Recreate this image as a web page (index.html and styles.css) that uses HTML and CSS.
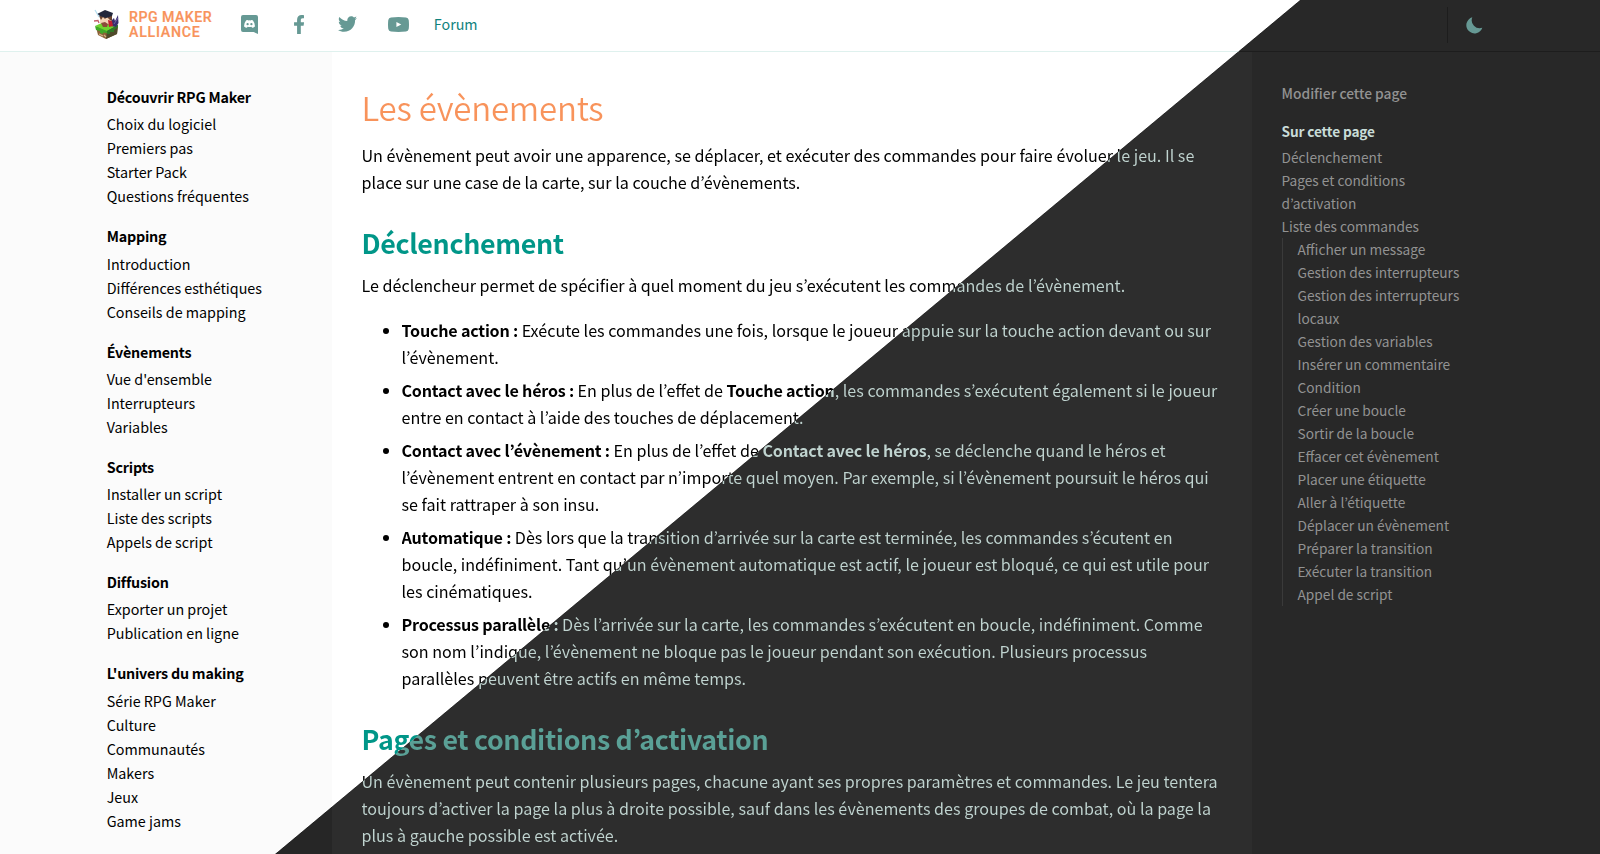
FILE: index.html
```html
<!DOCTYPE html>
<html lang="fr">
<head>
<meta charset="utf-8">
<title>Les évènements</title>
<link rel="stylesheet" href="styles.css">
</head>
<body>
<header class="topbar">
  <a class="brand">
    <svg class="brand-mark" viewBox="0 0 26 31" width="26" height="31">
      <path d="M2 18 L13 13 L24 17 L23 25 L12 30 L4 26 Z" fill="#8a6238"/>
      <path d="M1 17 L12 12 L24 16 L13 23 Z" fill="#6fd42f"/>
      <path d="M13 22 L24 16 L23 25 L12 30 Z" fill="#4f4a2a"/>
      <path d="M1 17 L13 22 V24 L9 23.500 V25 L6 24 V22 L2 21 Z" fill="#3fa928"/>
      <path d="M13 22 L24 16 V18 L20 21 V23 L16 23 V25 L13 25 Z" fill="#2f7a26"/>
      <path d="M5 25 L9 27 M10 26 L12 28" stroke="#d3b184" stroke-width="1.200"/>
      <path d="M18 11 L20 9 L21 12 L24 6 L24.500 14 L22 18 L17 17 Z" fill="#3a2f6e"/>
      <path d="M20 15 L24 9" stroke="#7d6bb8" stroke-width=".8"/>
      <path d="M6 7 H17 V14 L12 16 L6 14 Z" fill="#f3d3b6"/>
      <path d="M14 11 L18 12 L19 17 L15 18 Z" fill="#c2202f"/>
      <path d="M7 14 L11 13 L14 15 L13 18 L9 18 Z" fill="#8c4a3a"/>
      <path d="M5 7 L7 11 L9 8 L11 10 L13 8 L16 11 L18 12 V6 Z" fill="#6a4430"/>
      <path d="M3 5 L11 1 L19 4 L18 7 L12 9 L6 7 Z" fill="#20263a"/>
      <path d="M1 1 L5 8" stroke="#b4def0" stroke-width="1.200"/>
      <path d="M0 12 L4 11.500 L5 14" stroke="#c4606a" stroke-width="1.300" fill="none"/>
    </svg>
    <span class="brand-name"><span class="brand-line">RPG MAKER</span><span class="brand-line brand-line-b">ALLIANCE</span></span>
  </a>
  <nav class="social">
    <svg class="ico ico-discord" viewBox="0 0 17 19" width="17" height="19"><path fill-rule="evenodd" d="M2 0H15Q17 0 17 2V19L12.600 17H2Q0 17 0 15V2Q0 0 2 0ZM5.200 5.300Q2.900 8.300 3.100 11.500Q4.400 12.700 5.900 12.700L6.600 11.700Q8.500 12.200 10.400 11.700L11.100 12.700Q12.600 12.700 13.900 11.500Q14.100 8.300 11.800 5.300Q10.800 4.900 10 4.900L9.700 5.400Q8.500 5.200 7.300 5.400L7 4.900Q6.200 4.900 5.200 5.300Z"/><circle cx="6.600" cy="9.200" r="1.150"/><circle cx="10.400" cy="9.200" r="1.150"/></svg>
    <svg class="ico ico-facebook" viewBox="22.900 0 274.200 512" width="10.300" height="19"><path d="M279.140 288l14.220-92.660h-88.910v-60.130c0-25.350 12.420-50.060 52.240-50.060h40.420V6.260S260.430 0 225.360 0c-73.220 0-121.080 44.380-121.080 124.720v70.620H22.890V288h81.390v224h100.170V288z"/></svg>
    <svg class="ico ico-twitter" viewBox="0 48 512 416" width="19" height="16"><path d="M459.370 151.716c.325 4.548.325 9.097.325 13.645 0 138.720-105.583 298.558-298.558 298.558-59.452 0-114.680-17.219-161.137-47.106 8.447.974 16.568 1.299 25.340 1.299 49.055 0 94.213-16.568 130.274-44.832-46.132-.975-84.792-31.188-98.112-72.772 6.498.974 12.995 1.624 19.818 1.624 9.421 0 18.843-1.300 27.614-3.573-48.081-9.747-84.143-51.980-84.143-102.985v-1.299c13.969 7.797 30.214 12.670 47.431 13.319-28.264-18.843-46.781-51.005-46.781-87.391 0-19.492 5.197-37.360 14.294-52.954 51.655 63.675 129.300 105.258 216.365 109.807-1.624-7.797-2.599-15.918-2.599-24.040 0-57.828 46.782-104.934 104.934-104.934 30.213 0 57.502 12.670 76.670 33.137 23.715-4.548 46.456-13.320 66.599-25.340-7.798 24.366-24.366 44.833-46.132 57.827 21.117-2.273 41.584-8.122 60.426-16.243-14.292 20.791-32.161 39.308-52.628 54.253z"/></svg>
    <svg class="ico ico-youtube" viewBox="0 0 21 15" width="21" height="15"><path fill-rule="evenodd" d="M3 .4Q10.500-.4 18 .4Q20.300.6 20.700 3Q21.300 7.500 20.700 12Q20.300 14.400 18 14.600Q10.500 15.400 3 14.600Q.7 14.400.3 12Q-.3 7.500.3 3Q.7.6 3 .4ZM8.400 4.900V10.100L13.300 7.500Z"/></svg>
    <a class="forum">Forum</a>
  </nav>
  <div class="theme">
    <svg class="ico ico-moon" viewBox="0 0 17 17" width="17" height="17"><path d="M6.300.300A8.200 8.200 0 1 0 16.300 10.800A8 8 0 0 1 6.300.300Z"/></svg>
  </div>
</header>
<div class="page">
  <aside class="sidebar">
    <section class="group"><h3 class="group-title">Découvrir RPG Maker</h3><a class="item">Choix du logiciel</a><a class="item">Premiers pas</a><a class="item">Starter Pack</a><a class="item">Questions fréquentes</a></section>
    <section class="group"><h3 class="group-title">Mapping</h3><a class="item">Introduction</a><a class="item">Différences esthétiques</a><a class="item">Conseils de mapping</a></section>
    <section class="group"><h3 class="group-title">Évènements</h3><a class="item">Vue d'ensemble</a><a class="item">Interrupteurs</a><a class="item">Variables</a></section>
    <section class="group"><h3 class="group-title">Scripts</h3><a class="item">Installer un script</a><a class="item">Liste des scripts</a><a class="item">Appels de script</a></section>
    <section class="group"><h3 class="group-title">Diffusion</h3><a class="item">Exporter un projet</a><a class="item">Publication en ligne</a></section>
    <section class="group"><h3 class="group-title">L'univers du making</h3><a class="item">Série RPG Maker</a><a class="item">Culture</a><a class="item">Communautés</a><a class="item">Makers</a><a class="item">Jeux</a><a class="item">Game jams</a></section>
  </aside>
  <main class="article">
    <h1 class="title split split-title">Les évènements</h1>
    <p class="text split">Un évènement peut avoir une apparence, se déplacer, et exécuter des commandes pour faire évoluer le jeu. Il se<br>place sur une case de la carte, sur la couche d’évènements.</p>
    <h2 class="heading split split-heading">Déclenchement</h2>
    <p class="text split">Le déclencheur permet de spécifier à quel moment du jeu s’exécutent les commandes de l’évènement.</p>
    <ul class="list">
      <li class="entry split"><strong>Touche action :</strong> Exécute les commandes une fois, lorsque le joueur appuie sur la touche action devant ou sur<br>l’évènement.</li>
      <li class="entry split"><strong>Contact avec le héros :</strong> En plus de l’effet de <strong>Touche action</strong>, les commandes s’exécutent également si le joueur<br>entre en contact à l’aide des touches de déplacement.</li>
      <li class="entry split"><strong>Contact avec l’évènement :</strong> En plus de l’effet de <strong>Contact avec le héros</strong>, se déclenche quand le héros et<br>l’évènement entrent en contact par n’importe quel moyen. Par exemple, si l’évènement poursuit le héros qui<br>se fait rattraper à son insu.</li>
      <li class="entry split"><strong>Automatique :</strong> Dès lors que la transition d’arrivée sur la carte est terminée, les commandes s’écutent en<br>boucle, indéfiniment. Tant qu’un évènement automatique est actif, le joueur est bloqué, ce qui est utile pour<br>les cinématiques.</li>
      <li class="entry split"><strong>Processus parallèle :</strong> Dès l’arrivée sur la carte, les commandes s’exécutent en boucle, indéfiniment. Comme<br>son nom l’indique, l’évènement ne bloque pas le joueur pendant son exécution. Plusieurs processus<br>parallèles peuvent être actifs en même temps.</li>
    </ul>
    <h2 class="heading split split-heading">Pages et conditions d’activation</h2>
    <p class="text split">Un évènement peut contenir plusieurs pages, chacune ayant ses propres paramètres et commandes. Le jeu tentera<br>toujours d’activer la page la plus à droite possible, sauf dans les évènements des groupes de combat, où la page la<br>plus à gauche possible est activée.</p>
  </main>
  <aside class="toc">
    <a class="edit">Modifier cette page</a>
    <h3 class="toc-title">Sur cette page</h3>
    <a class="toc-item">Déclenchement</a><a class="toc-item">Pages et conditions<br>d’activation</a><a class="toc-item">Liste des commandes</a>
    <div class="toc-sub">
      <a class="toc-item">Afficher un message</a><a class="toc-item">Gestion des interrupteurs</a><a class="toc-item">Gestion des interrupteurs<br>locaux</a><a class="toc-item">Gestion des variables</a><a class="toc-item">Insérer un commentaire</a><a class="toc-item">Condition</a><a class="toc-item">Créer une boucle</a><a class="toc-item">Sortir de la boucle</a><a class="toc-item">Effacer cet évènement</a><a class="toc-item">Placer une étiquette</a><a class="toc-item">Aller à l’étiquette</a><a class="toc-item">Déplacer un évènement</a><a class="toc-item">Préparer la transition</a><a class="toc-item">Exécuter la transition</a><a class="toc-item">Appel de script</a>
    </div>
  </aside>
</div>
</body>
</html>
```
FILE: styles.css
```css
/* Light and dark themes meet on one diagonal: every surface paints the same
   viewport-fixed gradient with its own pair of colours. */
* { box-sizing: border-box; margin: 0; padding: 0; }
body {
  height: 854px;
  overflow: hidden;
  font-family: "Noto Sans CJK JP", "Noto Sans", sans-serif;
  color: #000;
  display: flex;
  flex-direction: column;
}
.topbar, .sidebar, .article, .toc, .split {
  background-image: linear-gradient(140.2deg, var(--light) 831.8px, var(--dark) 832.6px);
  background-attachment: fixed;
}
.topbar {
  --light: #fff; --dark: #282828;
  flex: none;
  height: 52px;
  display: flex;
  align-items: flex-start;
  padding: 0 116px 0 94px;
  position: relative;
}
.topbar::after {
  content: "";
  position: absolute;
  left: 0; right: 0; bottom: 0;
  height: 1px;
  background: linear-gradient(140.2deg, #dff1ee 832.1px, #1d1d1d 832.6px) fixed;
}
.brand { display: flex; width: 147px; padding-top: 9px; }
.brand-mark { flex: none; }
.brand-name {
  display: flex;
  flex-direction: column;
  margin-left: 9px;
  padding-top: 1px;
  font: 500 14.200px/14px Roboto, sans-serif;
  color: #f8935b;
  white-space: nowrap;
}
.brand-line { letter-spacing: 0.450px; -webkit-text-stroke: 0.200px #f8935b; }
.brand-line-b { letter-spacing: 0.750px; padding-top: 1px; }
.social { display: flex; align-items: flex-start; }
.ico { fill: #669994; flex: none; }
.ico-discord { margin-top: 15px; }
.ico-facebook { margin: 15px 0 0 36px; }
.ico-twitter { margin: 16px 0 0 34px; }
.ico-youtube { margin: 16.500px 0 0 31px; }
.ico-moon { display: block; }
.forum { margin: 12px 0 0 24.500px; font-size: 14.300px; line-height: 24px; color: #10827d; }
.theme {
  margin: 7px 0 0 auto;
  height: 36px;
  padding: 9.500px 1px 0 18px;
  border-left: 1px solid #1d1d1d;
}
.page { flex: 1; min-height: 0; display: grid; grid-template-columns: 332px 920px 1fr; }
.sidebar { --light: #fbfbfb; --dark: #262626; padding: 33px 0 0 106.700px; overflow: hidden; }
.group { padding-bottom: 15.940px; }
.group-title { font-size: 14.300px; font-weight: 700; letter-spacing: -0.210px; line-height: 24px; height: 27.340px; }
.item { display: block; font-size: 14.320px; line-height: 24px; }
.article { --light: #fff; --dark: #2d2d2d; padding: 30px 0 0 29.500px; white-space: nowrap; overflow: hidden; }
.split {
  --light: #000; --dark: #c0d4d0;
  -webkit-background-clip: text;
  background-clip: text;
  -webkit-text-fill-color: transparent;
}
.split-title { --light: #f8935b; --dark: #f8935b; }
.split-heading { --light: #009688; --dark: #5aa096; }
.title { font-size: 33px; font-weight: 350; letter-spacing: -0.220px; line-height: 50px; color: #f8935b; padding-bottom: 10px; }
.text { font-size: 16.120px; line-height: 27px; }
.heading { font-size: 26.800px; font-weight: 700; letter-spacing: -0.350px; line-height: 40px; margin-top: 27px; padding-bottom: 9px; color: #009688; }
.list { list-style: disc; padding-left: 40px; margin-top: 18px; }
.entry { font-size: 16.120px; line-height: 27px; margin-bottom: 6px; }
.entry::marker { color: #000; -webkit-text-fill-color: #000; }
.entry strong { font-weight: 700; letter-spacing: -0.210px; }
.toc { --light: #fbfbfb; --dark: #282828; padding: 30px 0 0 29.500px; color: #929292; }
.edit { display: block; font-size: 13.800px; font-weight: 500; line-height: 23px; }
.toc-title { font-size: 13.700px; font-weight: 700; letter-spacing: -0.150px; line-height: 23px; color: #c8dcd8; margin: 15px 0 3px; }
.toc-item { display: block; font-size: 13.710px; line-height: 23px; }
.toc-sub { border-left: 1px solid #3a3a3a; padding-left: 15px; }
```
